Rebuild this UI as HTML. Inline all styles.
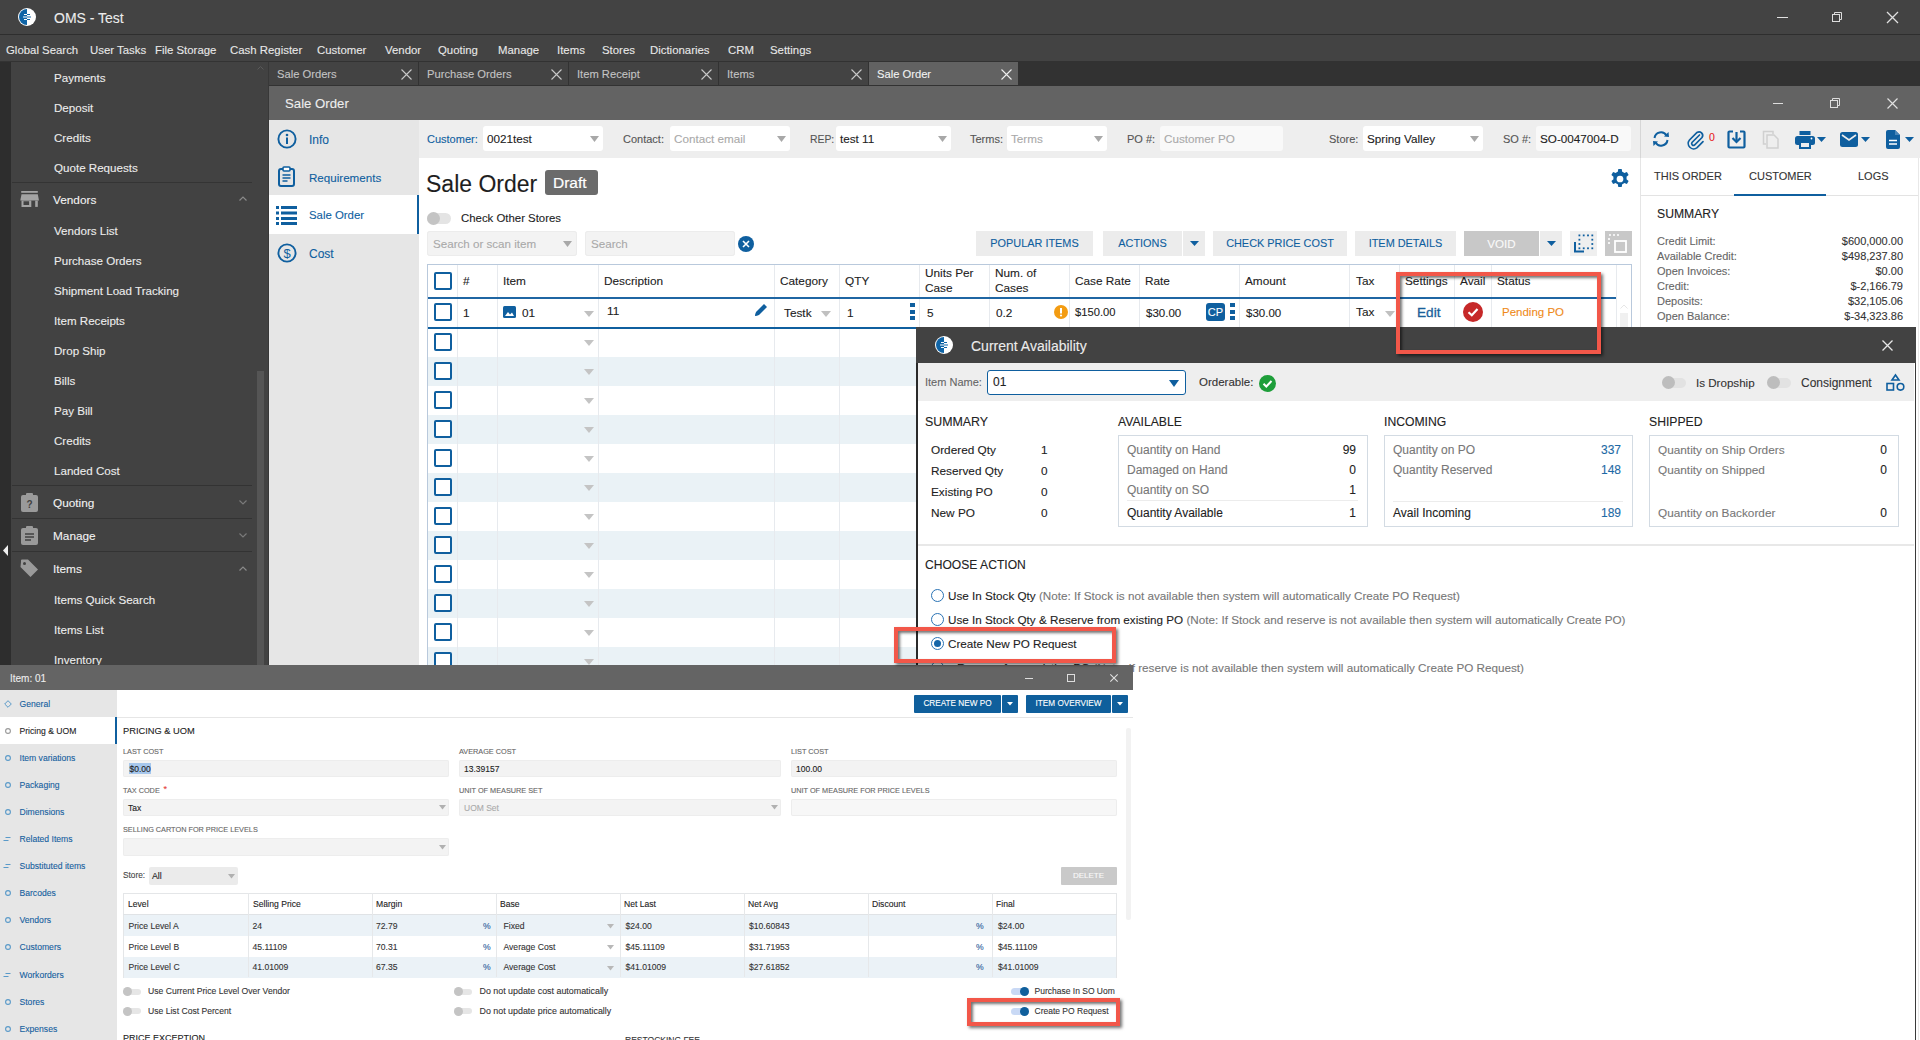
<!DOCTYPE html><html><head><meta charset="utf-8"><style>
html,body{margin:0;padding:0;width:1920px;height:1040px;overflow:hidden;background:#fff;}
body{position:relative;font-family:"Liberation Sans",sans-serif;}
.a{position:absolute;}
.t{white-space:nowrap;-webkit-text-stroke:0.1px currentColor;}
svg{overflow:visible;}
</style></head><body>
<div class="a" style="left:0px;top:0px;width:1920px;height:34px;background:#434343"></div>
<div class="a" style="left:0px;top:34px;width:1920px;height:1px;background:#2e2e2e"></div>
<div class="a" style="left:0px;top:35px;width:1920px;height:26px;background:#434343"></div>
<svg class="a" style="left:17.0px;top:7.0px;" width="20.0" height="20.0" viewBox="0 0 20.0 20.0"><g transform="scale(1.0)"><circle cx="10" cy="10" r="9" fill="#fff"/><path d="M10 2A8 8 0 0 0 10 18Z" fill="#0f64a6"/><path d="M7 7.5h3M6 10h4M7 12.5h3" stroke="#fff" stroke-width="1.2"/><path d="M10 7.5h3M10 10h4M10 12.5h3" stroke="#0f64a6" stroke-width="1.2"/><path d="M6 10h8" stroke="#8fb6d6" stroke-width="1.3" opacity="0.8"/></g></svg>
<div class="a t" style="left:54px;top:9.60px;font-size:14px;line-height:16.80px;color:#ececec;">OMS - Test</div>
<div class="a" style="left:1777px;top:17px;width:11px;height:1.3px;background:#e0e0e0"></div>
<svg class="a" style="left:1831px;top:11px;" width="12" height="12" viewBox="0 0 12 12"><rect x="1.5" y="3.5" width="7" height="7" fill="none" stroke="#ddd"/><path d="M3.5 3.5V1.5h7v7h-2" fill="none" stroke="#ddd"/></svg>
<svg class="a" style="left:1886px;top:11px;" width="13" height="13" viewBox="0 0 13 13"><path d="M1 1L12 12M12 1L1 12" stroke="#e0e0e0" stroke-width="1.3"/></svg>
<div class="a t" style="left:6px;top:44.16px;font-size:11.4px;line-height:13.68px;color:#e8e8e8;">Global Search</div>
<div class="a t" style="left:90px;top:44.16px;font-size:11.4px;line-height:13.68px;color:#e8e8e8;">User Tasks</div>
<div class="a t" style="left:155px;top:44.16px;font-size:11.4px;line-height:13.68px;color:#e8e8e8;">File Storage</div>
<div class="a t" style="left:230px;top:44.16px;font-size:11.4px;line-height:13.68px;color:#e8e8e8;">Cash Register</div>
<div class="a t" style="left:317px;top:44.16px;font-size:11.4px;line-height:13.68px;color:#e8e8e8;">Customer</div>
<div class="a t" style="left:385px;top:44.16px;font-size:11.4px;line-height:13.68px;color:#e8e8e8;">Vendor</div>
<div class="a t" style="left:438px;top:44.16px;font-size:11.4px;line-height:13.68px;color:#e8e8e8;">Quoting</div>
<div class="a t" style="left:498px;top:44.16px;font-size:11.4px;line-height:13.68px;color:#e8e8e8;">Manage</div>
<div class="a t" style="left:557px;top:44.16px;font-size:11.4px;line-height:13.68px;color:#e8e8e8;">Items</div>
<div class="a t" style="left:602px;top:44.16px;font-size:11.4px;line-height:13.68px;color:#e8e8e8;">Stores</div>
<div class="a t" style="left:650px;top:44.16px;font-size:11.4px;line-height:13.68px;color:#e8e8e8;">Dictionaries</div>
<div class="a t" style="left:728px;top:44.16px;font-size:11.4px;line-height:13.68px;color:#e8e8e8;">CRM</div>
<div class="a t" style="left:770px;top:44.16px;font-size:11.4px;line-height:13.68px;color:#e8e8e8;">Settings</div>
<div class="a" style="left:0px;top:61px;width:11px;height:604px;background:#2d2d2d"></div>
<div class="a" style="left:11px;top:61px;width:258px;height:604px;background:#424242"></div>
<div class="a" style="left:257px;top:371px;width:7px;height:294px;background:#555555"></div>
<div class="a" style="left:268px;top:61px;width:1px;height:604px;background:#383838"></div>
<div class="a" style="left:0px;top:61px;width:269px;height:1px;background:#333333"></div>
<svg class="a" style="left:257px;top:66px;" width="7" height="4" viewBox="0 0 7 4"><path d="M0.5 3.5L3.5 0.5L6.5 3.5" fill="none" stroke="#5a5a5a" stroke-width="1"/></svg>
<div class="a t" style="left:54px;top:71.04px;font-size:11.6px;line-height:13.92px;color:#ececec;">Payments</div>
<div class="a t" style="left:54px;top:101.04px;font-size:11.6px;line-height:13.92px;color:#ececec;">Deposit</div>
<div class="a t" style="left:54px;top:131.04px;font-size:11.6px;line-height:13.92px;color:#ececec;">Credits</div>
<div class="a t" style="left:54px;top:161.04px;font-size:11.6px;line-height:13.92px;color:#ececec;">Quote Requests</div>
<div class="a" style="left:12px;top:182px;width:240px;height:1px;background:#343434"></div>
<svg class="a" style="left:20px;top:191px;" width="19" height="16" viewBox="0 0 19 16"><rect x="1.2" y="0" width="16.6" height="1.8" fill="#a4a4a4"/><path d="M1.5 3.2H17.8L19 9.6H0.3Z" fill="#a4a4a4"/><path d="M1.5 9.6H11.3V15.9H1.5ZM3.5 10.3V13.9H9.1V10.3Z" fill="#a4a4a4" fill-rule="evenodd"/><rect x="15.2" y="9.6" width="2.6" height="6.3" fill="#a4a4a4"/></svg>
<div class="a t" style="left:53px;top:192.92px;font-size:11.8px;line-height:14.16px;color:#f2f2f2;">Vendors</div>
<svg class="a" style="left:239px;top:196px;" width="8" height="5" viewBox="0 0 8 5"><path d="M0.5 4.5L4 1L7.5 4.5" fill="none" stroke="#8a8a8a" stroke-width="1.2"/></svg>
<div class="a t" style="left:54px;top:224.04px;font-size:11.6px;line-height:13.92px;color:#ececec;">Vendors List</div>
<div class="a t" style="left:54px;top:254.04px;font-size:11.6px;line-height:13.92px;color:#ececec;">Purchase Orders</div>
<div class="a t" style="left:54px;top:284.04px;font-size:11.6px;line-height:13.92px;color:#ececec;">Shipment Load Tracking</div>
<div class="a t" style="left:54px;top:314.04px;font-size:11.6px;line-height:13.92px;color:#ececec;">Item Receipts</div>
<div class="a t" style="left:54px;top:344.04px;font-size:11.6px;line-height:13.92px;color:#ececec;">Drop Ship</div>
<div class="a t" style="left:54px;top:374.04px;font-size:11.6px;line-height:13.92px;color:#ececec;">Bills</div>
<div class="a t" style="left:54px;top:404.04px;font-size:11.6px;line-height:13.92px;color:#ececec;">Pay Bill</div>
<div class="a t" style="left:54px;top:434.04px;font-size:11.6px;line-height:13.92px;color:#ececec;">Credits</div>
<div class="a t" style="left:54px;top:464.04px;font-size:11.6px;line-height:13.92px;color:#ececec;">Landed Cost</div>
<div class="a" style="left:12px;top:485px;width:240px;height:1px;background:#333333"></div>
<div class="a" style="left:12px;top:518px;width:240px;height:1px;background:#333333"></div>
<div class="a" style="left:12px;top:551px;width:240px;height:1px;background:#333333"></div>
<svg class="a" style="left:21px;top:493px;" width="17" height="19" viewBox="0 0 17 19"><rect x="0" y="2" width="17" height="17" rx="2" fill="#9a9a9a"/><rect x="5" y="0" width="7" height="4" rx="1" fill="#9a9a9a"/><text x="8.5" y="15" font-size="10" font-family="Liberation Sans" fill="#424242" text-anchor="middle" font-weight="bold">?</text></svg>
<div class="a t" style="left:53px;top:495.92px;font-size:11.8px;line-height:14.16px;color:#f2f2f2;">Quoting</div>
<svg class="a" style="left:239px;top:500px;" width="8" height="5" viewBox="0 0 8 5"><path d="M0.5 0.5L4 4L7.5 0.5" fill="none" stroke="#7a7a7a" stroke-width="1.2"/></svg>
<svg class="a" style="left:21px;top:526px;" width="17" height="19" viewBox="0 0 17 19"><rect x="0" y="2" width="17" height="17" rx="2" fill="#9a9a9a"/><rect x="5" y="0" width="7" height="4" rx="1" fill="#9a9a9a"/><path d="M4 8h9M4 11h9M4 14h6" stroke="#424242" stroke-width="1.5"/></svg>
<div class="a t" style="left:53px;top:528.92px;font-size:11.8px;line-height:14.16px;color:#f2f2f2;">Manage</div>
<svg class="a" style="left:239px;top:533px;" width="8" height="5" viewBox="0 0 8 5"><path d="M0.5 0.5L4 4L7.5 0.5" fill="none" stroke="#7a7a7a" stroke-width="1.2"/></svg>
<svg class="a" style="left:20px;top:559px;" width="19" height="19" viewBox="0 0 19 19"><path d="M1 3V1.5A1 1 0 0 1 2 0.5h6l10 10-7.5 7.5L0.5 8Z" fill="#9a9a9a" transform="rotate(0)"/><circle cx="4.5" cy="4.5" r="1.5" fill="#424242"/></svg>
<div class="a t" style="left:53px;top:561.92px;font-size:11.8px;line-height:14.16px;color:#f2f2f2;">Items</div>
<svg class="a" style="left:239px;top:566px;" width="8" height="5" viewBox="0 0 8 5"><path d="M0.5 4.5L4 1L7.5 4.5" fill="none" stroke="#8a8a8a" stroke-width="1.2"/></svg>
<div class="a t" style="left:54px;top:593.04px;font-size:11.6px;line-height:13.92px;color:#ececec;">Items Quick Search</div>
<div class="a t" style="left:54px;top:623.04px;font-size:11.6px;line-height:13.92px;color:#ececec;">Items List</div>
<div class="a t" style="left:54px;top:653.04px;font-size:11.6px;line-height:13.92px;color:#ececec;">Inventory</div>
<svg class="a" style="left:3px;top:545px;" width="5" height="11" viewBox="0 0 5 11"><path d="M5 0V11L0 5.5Z" fill="#f0f0f0"/></svg>
<div class="a" style="left:269px;top:61px;width:1651px;height:25px;background:#323232"></div>
<div class="a" style="left:269px;top:62px;width:149px;height:23px;background:#434343"></div>
<div class="a t" style="left:277px;top:68.28px;font-size:11.2px;line-height:13.44px;color:#c4c4c4;">Sale Orders</div>
<svg class="a" style="left:401px;top:69px;" width="11" height="11" viewBox="0 0 11 11"><path d="M0.5 0.5L10.5 10.5M10.5 0.5L0.5 10.5" stroke="#c8c8c8" stroke-width="1.1"/></svg>
<div class="a" style="left:419px;top:62px;width:149px;height:23px;background:#434343"></div>
<div class="a t" style="left:427px;top:68.28px;font-size:11.2px;line-height:13.44px;color:#c4c4c4;">Purchase Orders</div>
<svg class="a" style="left:551px;top:69px;" width="11" height="11" viewBox="0 0 11 11"><path d="M0.5 0.5L10.5 10.5M10.5 0.5L0.5 10.5" stroke="#c8c8c8" stroke-width="1.1"/></svg>
<div class="a" style="left:569px;top:62px;width:149px;height:23px;background:#434343"></div>
<div class="a t" style="left:577px;top:68.28px;font-size:11.2px;line-height:13.44px;color:#c4c4c4;">Item Receipt</div>
<svg class="a" style="left:701px;top:69px;" width="11" height="11" viewBox="0 0 11 11"><path d="M0.5 0.5L10.5 10.5M10.5 0.5L0.5 10.5" stroke="#c8c8c8" stroke-width="1.1"/></svg>
<div class="a" style="left:719px;top:62px;width:149px;height:23px;background:#434343"></div>
<div class="a t" style="left:727px;top:68.28px;font-size:11.2px;line-height:13.44px;color:#c4c4c4;">Items</div>
<svg class="a" style="left:851px;top:69px;" width="11" height="11" viewBox="0 0 11 11"><path d="M0.5 0.5L10.5 10.5M10.5 0.5L0.5 10.5" stroke="#c8c8c8" stroke-width="1.1"/></svg>
<div class="a" style="left:869px;top:62px;width:149px;height:23px;background:#626262"></div>
<div class="a t" style="left:877px;top:68.28px;font-size:11.2px;line-height:13.44px;color:#f2f2f2;">Sale Order</div>
<svg class="a" style="left:1001px;top:69px;" width="11" height="11" viewBox="0 0 11 11"><path d="M0.5 0.5L10.5 10.5M10.5 0.5L0.5 10.5" stroke="#eee" stroke-width="1.1"/></svg>
<div class="a" style="left:269px;top:86px;width:1651px;height:34px;background:#636363"></div>
<div class="a t" style="left:285px;top:96.08px;font-size:13.2px;line-height:15.84px;color:#eeeeee;">Sale Order</div>
<div class="a" style="left:1773px;top:102.5px;width:10px;height:1.5px;background:#ddd"></div>
<svg class="a" style="left:1829px;top:97px;" width="12" height="12" viewBox="0 0 12 12"><rect x="1.5" y="3.5" width="7" height="7" fill="none" stroke="#ddd"/><path d="M3.5 3.5V1.5h7v7h-2" fill="none" stroke="#ddd"/></svg>
<svg class="a" style="left:1887px;top:98px;" width="11" height="11" viewBox="0 0 11 11"><path d="M0.5 0.5L10.5 10.5M10.5 0.5L0.5 10.5" stroke="#e0e0e0" stroke-width="1.2"/></svg>
<div class="a" style="left:269px;top:120px;width:150px;height:545px;background:#e6e6e6"></div>
<div class="a" style="left:269px;top:195px;width:148px;height:39px;background:#ffffff"></div>
<div class="a" style="left:417px;top:195px;width:2px;height:39px;background:#0f5f9f"></div>
<svg class="a" style="left:277px;top:129px;" width="20" height="20" viewBox="0 0 20 20"><circle cx="10" cy="10" r="8.6" fill="none" stroke="#0f5f9f" stroke-width="1.9"/><circle cx="10" cy="6" r="1.3" fill="#0f5f9f"/><rect x="9" y="8.5" width="2" height="6.5" fill="#0f5f9f"/></svg>
<div class="a t" style="left:309px;top:132.80px;font-size:12px;line-height:14.40px;color:#0f5f9f;">Info</div>
<svg class="a" style="left:278px;top:166px;" width="17" height="21" viewBox="0 0 17 21"><rect x="1" y="3" width="15" height="17" rx="2" fill="none" stroke="#0f5f9f" stroke-width="2"/><rect x="5" y="1" width="7" height="4" rx="1" fill="#fff" stroke="#0f5f9f" stroke-width="1.6"/><path d="M4.5 9h8M4.5 12h8M4.5 15h5" stroke="#0f5f9f" stroke-width="1.6"/></svg>
<div class="a t" style="left:309px;top:171.04px;font-size:11.6px;line-height:13.92px;color:#0f5f9f;">Requirements</div>
<svg class="a" style="left:276px;top:205px;" width="21" height="20" viewBox="0 0 21 20"><rect x="0" y="1" width="3" height="3" fill="#0f5f9f"/><rect x="5" y="1" width="16" height="3" fill="#0f5f9f"/><rect x="0" y="6.5" width="3" height="3" fill="#0f5f9f"/><rect x="5" y="6.5" width="16" height="3" fill="#0f5f9f"/><rect x="0" y="12" width="3" height="3" fill="#0f5f9f"/><rect x="5" y="12" width="16" height="3" fill="#0f5f9f"/><rect x="0" y="17" width="3" height="3" fill="#0f5f9f"/><rect x="5" y="17" width="16" height="3" fill="#0f5f9f"/></svg>
<div class="a t" style="left:309px;top:209.16px;font-size:11.4px;line-height:13.68px;color:#0f5f9f;">Sale Order</div>
<svg class="a" style="left:277px;top:243px;" width="20" height="20" viewBox="0 0 20 20"><circle cx="10" cy="10" r="8.6" fill="none" stroke="#0f5f9f" stroke-width="1.9"/><text x="10" y="14.6" font-size="13" font-family="Liberation Sans" fill="#0f5f9f" text-anchor="middle">$</text></svg>
<div class="a t" style="left:309px;top:246.80px;font-size:12px;line-height:14.40px;color:#0f5f9f;">Cost</div>
<div class="a" style="left:419px;top:120px;width:1222px;height:38px;background:#eeeeee"></div>
<div class="a t" style="left:427px;top:133.40px;font-size:11px;line-height:13.20px;color:#0f5f9f;">Customer:</div>
<div class="a" style="left:483px;top:126px;width:120px;height:25px;background:#fff;border-radius:3px"></div>
<div class="a t" style="left:487px;top:131.98px;font-size:11.7px;line-height:14.04px;color:#222;">0021test</div>
<svg class="a" style="left:589.5px;top:136.0px;" width="9" height="6" viewBox="0 0 9 6"><path d="M0 0H9L4.5 6Z" fill="#a8a8a8"/></svg>
<div class="a t" style="left:623px;top:133.40px;font-size:11px;line-height:13.20px;color:#555;">Contact:</div>
<div class="a" style="left:670px;top:126px;width:120px;height:25px;background:#fff;border-radius:3px"></div>
<div class="a t" style="left:674px;top:131.98px;font-size:11.7px;line-height:14.04px;color:#a9a9a9;">Contact email</div>
<svg class="a" style="left:776.5px;top:136.0px;" width="9" height="6" viewBox="0 0 9 6"><path d="M0 0H9L4.5 6Z" fill="#a8a8a8"/></svg>
<div class="a t" style="left:810px;top:133.76px;font-size:10.4px;line-height:12.48px;color:#555;">REP:</div>
<div class="a" style="left:836px;top:126px;width:115px;height:25px;background:#fff;border-radius:3px"></div>
<div class="a t" style="left:840px;top:131.98px;font-size:11.7px;line-height:14.04px;color:#222;">test 11</div>
<svg class="a" style="left:937.5px;top:136.0px;" width="9" height="6" viewBox="0 0 9 6"><path d="M0 0H9L4.5 6Z" fill="#a8a8a8"/></svg>
<div class="a t" style="left:970px;top:133.40px;font-size:11px;line-height:13.20px;color:#555;">Terms:</div>
<div class="a" style="left:1007px;top:126px;width:100px;height:25px;background:#fff;border-radius:3px"></div>
<div class="a t" style="left:1011px;top:131.98px;font-size:11.7px;line-height:14.04px;color:#a9a9a9;">Terms</div>
<svg class="a" style="left:1093.5px;top:136.0px;" width="9" height="6" viewBox="0 0 9 6"><path d="M0 0H9L4.5 6Z" fill="#a8a8a8"/></svg>
<div class="a t" style="left:1127px;top:133.40px;font-size:11px;line-height:13.20px;color:#555;">PO #:</div>
<div class="a" style="left:1160px;top:126px;width:123px;height:25px;background:#f9f9f9;border-radius:3px"></div>
<div class="a t" style="left:1164px;top:131.98px;font-size:11.7px;line-height:14.04px;color:#a9a9a9;">Customer PO</div>
<div class="a t" style="left:1329px;top:133.40px;font-size:11px;line-height:13.20px;color:#555;">Store:</div>
<div class="a" style="left:1363px;top:126px;width:120px;height:25px;background:#fff;border-radius:3px"></div>
<div class="a t" style="left:1367px;top:131.98px;font-size:11.7px;line-height:14.04px;color:#222;">Spring Valley</div>
<svg class="a" style="left:1469.5px;top:136.0px;" width="9" height="6" viewBox="0 0 9 6"><path d="M0 0H9L4.5 6Z" fill="#a8a8a8"/></svg>
<div class="a t" style="left:1503px;top:133.40px;font-size:11px;line-height:13.20px;color:#555;">SO #:</div>
<div class="a" style="left:1536px;top:126px;width:95px;height:25px;background:#f9f9f9;border-radius:3px"></div>
<div class="a t" style="left:1540px;top:131.98px;font-size:11.7px;line-height:14.04px;color:#222;">SO-0047004-D</div>
<div class="a t" style="left:426px;top:170.70px;font-size:23px;line-height:27.60px;color:#1e1e1e;">Sale Order</div>
<div class="a" style="left:545px;top:170px;width:53px;height:25px;background:#6b6b6b;border-radius:3px"></div>
<div class="a t" style="left:553px;top:173.70px;font-size:15.5px;line-height:18.60px;color:#ffffff;-webkit-text-stroke:0.2px #fff">Draft</div>
<svg class="a" style="left:1610px;top:169px;" width="20" height="20" viewBox="0 0 20 20"><g transform="translate(10 10) scale(1.05)" fill="#0f5f9f"><path d="M-1.6-9.5h3.2l.5 2.6a7 7 0 0 1 2 1.2l2.5-.9 1.6 2.8-2 1.7a7 7 0 0 1 0 2.3l2 1.7-1.6 2.8-2.5-.9a7 7 0 0 1-2 1.2l-.5 2.6h-3.2l-.5-2.6a7 7 0 0 1-2-1.2l-2.5.9-1.6-2.8 2-1.7a7 7 0 0 1 0-2.3l-2-1.7 1.6-2.8 2.5.9a7 7 0 0 1 2-1.2Z"/><circle r="3.2" fill="#fff"/></g></svg>
<div class="a" style="left:427px;top:213px;width:24px;height:11px;background:#e4e4e4;border-radius:6px"></div>
<div class="a" style="left:427px;top:212px;width:13px;height:13px;border-radius:50%;background:#c4c4c4"></div>
<div class="a t" style="left:461px;top:212.16px;font-size:11.4px;line-height:13.68px;color:#222;">Check Other Stores</div>
<div class="a" style="left:427px;top:231px;width:150px;height:25px;background:#f3f3f3;border-radius:3px;box-shadow:inset 0 0 0 1px #ececec"></div>
<div class="a t" style="left:433px;top:237.04px;font-size:11.6px;line-height:13.92px;color:#a9a9a9;">Search or scan item</div>
<svg class="a" style="left:562.5px;top:241.0px;" width="9" height="6" viewBox="0 0 9 6"><path d="M0 0H9L4.5 6Z" fill="#a8a8a8"/></svg>
<div class="a" style="left:585px;top:231px;width:150px;height:25px;background:#f3f3f3;border-radius:3px;box-shadow:inset 0 0 0 1px #ececec"></div>
<div class="a t" style="left:591px;top:237.04px;font-size:11.6px;line-height:13.92px;color:#a9a9a9;">Search</div>
<svg class="a" style="left:738px;top:236px;" width="16" height="16" viewBox="0 0 16 16"><circle cx="8" cy="8" r="8" fill="#0f5f9f"/><path d="M5 5L11 11M11 5L5 11" stroke="#fff" stroke-width="1.6"/></svg>
<div class="a" style="left:976px;top:231px;width:117px;height:25px;background:#ececec"></div>
<div class="a t" style="left:976px;top:237.46px;width:117px;text-align:center;font-size:10.9px;line-height:13.08px;color:#0f5f9f">POPULAR ITEMS</div>
<div class="a" style="left:1103px;top:231px;width:79px;height:25px;background:#ececec"></div>
<div class="a t" style="left:1103px;top:237.46px;width:79px;text-align:center;font-size:10.9px;line-height:13.08px;color:#0f5f9f">ACTIONS</div>
<div class="a" style="left:1183px;top:231px;width:22px;height:25px;background:#ececec"></div>
<svg class="a" style="left:1189.5px;top:241.0px;" width="9" height="5" viewBox="0 0 9 5"><path d="M0 0H9L4.5 5Z" fill="#0f5f9f"/></svg>
<div class="a" style="left:1213px;top:231px;width:134px;height:25px;background:#ececec"></div>
<div class="a t" style="left:1213px;top:237.46px;width:134px;text-align:center;font-size:10.9px;line-height:13.08px;color:#0f5f9f">CHECK PRICE COST</div>
<div class="a" style="left:1355px;top:231px;width:101px;height:25px;background:#ececec"></div>
<div class="a t" style="left:1355px;top:237.46px;width:101px;text-align:center;font-size:10.9px;line-height:13.08px;color:#0f5f9f">ITEM DETAILS</div>
<div class="a" style="left:1464px;top:231px;width:75px;height:25px;background:#c8c8c8"></div>
<div class="a t" style="left:1464px;top:237.04px;width:75px;text-align:center;font-size:11.6px;line-height:13.92px;color:#fafafa">VOID</div>
<div class="a" style="left:1540px;top:231px;width:22px;height:25px;background:#ececec"></div>
<svg class="a" style="left:1546.5px;top:241.0px;" width="9" height="5" viewBox="0 0 9 5"><path d="M0 0H9L4.5 5Z" fill="#0f5f9f"/></svg>
<div class="a" style="left:1570px;top:231px;width:27px;height:25px;background:#efefef"></div>
<svg class="a" style="left:1574px;top:234px;" width="20" height="20" viewBox="0 0 20 20"><rect x="4.5" y="0.5" width="1.8" height="1.8" fill="#0f5f9f"/><rect x="4.5" y="4.8" width="1.8" height="1.8" fill="#0f5f9f"/><rect x="4.5" y="9.1" width="1.8" height="1.8" fill="#0f5f9f"/><rect x="4.5" y="13.4" width="1.8" height="1.8" fill="#0f5f9f"/><rect x="8.8" y="0.5" width="1.8" height="1.8" fill="#0f5f9f"/><rect x="8.8" y="13.4" width="1.8" height="1.8" fill="#0f5f9f"/><rect x="13.1" y="0.5" width="1.8" height="1.8" fill="#0f5f9f"/><rect x="13.1" y="13.4" width="1.8" height="1.8" fill="#0f5f9f"/><rect x="17.4" y="0.5" width="1.8" height="1.8" fill="#0f5f9f"/><rect x="17.4" y="4.8" width="1.8" height="1.8" fill="#0f5f9f"/><rect x="17.4" y="9.1" width="1.8" height="1.8" fill="#0f5f9f"/><rect x="17.4" y="13.4" width="1.8" height="1.8" fill="#0f5f9f"/><path d="M1 8V17.5H10" fill="none" stroke="#0f5f9f" stroke-width="2"/></svg>
<div class="a" style="left:1605px;top:231px;width:27px;height:25px;background:#c8c8c8"></div>
<svg class="a" style="left:1608px;top:234px;" width="21" height="19" viewBox="0 0 21 19"><rect x="7" y="7" width="11" height="11" fill="none" stroke="#fff" stroke-width="1.8"/><path d="M1 1h2M5 1h2M9 1h2M1 4v2M1 8v2" stroke="#fff" stroke-width="1.6"/></svg>
<div class="a" style="left:427px;top:264px;width:1205px;height:401px;background:#fff;box-shadow:inset 1px 0 0 #b9c9dc, inset -1px 0 0 #b9c9dc, inset 0 1px 0 #b9c9dc"></div>
<div class="a" style="left:428px;top:357px;width:1188px;height:29px;background:#eaf2f6"></div>
<div class="a" style="left:428px;top:415px;width:1188px;height:29px;background:#eaf2f6"></div>
<div class="a" style="left:428px;top:473px;width:1188px;height:29px;background:#eaf2f6"></div>
<div class="a" style="left:428px;top:531px;width:1188px;height:29px;background:#eaf2f6"></div>
<div class="a" style="left:428px;top:589px;width:1188px;height:29px;background:#eaf2f6"></div>
<div class="a" style="left:428px;top:647px;width:1188px;height:29px;background:#eaf2f6"></div>
<div class="a" style="left:457px;top:265px;width:1px;height:400px;background:#e7eaee"></div>
<div class="a" style="left:497px;top:265px;width:1px;height:400px;background:#e7eaee"></div>
<div class="a" style="left:598px;top:265px;width:1px;height:400px;background:#e7eaee"></div>
<div class="a" style="left:774px;top:265px;width:1px;height:400px;background:#e7eaee"></div>
<div class="a" style="left:839px;top:265px;width:1px;height:400px;background:#e7eaee"></div>
<div class="a" style="left:919px;top:265px;width:1px;height:400px;background:#e7eaee"></div>
<div class="a" style="left:989px;top:265px;width:1px;height:400px;background:#e7eaee"></div>
<div class="a" style="left:1069px;top:265px;width:1px;height:400px;background:#e7eaee"></div>
<div class="a" style="left:1139px;top:265px;width:1px;height:400px;background:#e7eaee"></div>
<div class="a" style="left:1239px;top:265px;width:1px;height:400px;background:#e7eaee"></div>
<div class="a" style="left:1349px;top:265px;width:1px;height:400px;background:#e7eaee"></div>
<div class="a" style="left:1399px;top:265px;width:1px;height:400px;background:#e7eaee"></div>
<div class="a" style="left:1454px;top:265px;width:1px;height:400px;background:#e7eaee"></div>
<div class="a" style="left:1491px;top:265px;width:1px;height:400px;background:#e7eaee"></div>
<div class="a" style="left:1616px;top:265px;width:1px;height:400px;background:#e7eaee"></div>
<div class="a t" style="left:463px;top:273.92px;font-size:11.8px;line-height:14.16px;color:#222;">#</div>
<div class="a t" style="left:503px;top:273.92px;font-size:11.8px;line-height:14.16px;color:#222;">Item</div>
<div class="a t" style="left:604px;top:273.92px;font-size:11.8px;line-height:14.16px;color:#222;">Description</div>
<div class="a t" style="left:780px;top:273.92px;font-size:11.8px;line-height:14.16px;color:#222;">Category</div>
<div class="a t" style="left:845px;top:273.92px;font-size:11.8px;line-height:14.16px;color:#222;">QTY</div>
<div class="a t" style="left:1075px;top:273.92px;font-size:11.8px;line-height:14.16px;color:#222;">Case Rate</div>
<div class="a t" style="left:1145px;top:273.92px;font-size:11.8px;line-height:14.16px;color:#222;">Rate</div>
<div class="a t" style="left:1245px;top:273.92px;font-size:11.8px;line-height:14.16px;color:#222;">Amount</div>
<div class="a t" style="left:1356px;top:273.92px;font-size:11.8px;line-height:14.16px;color:#222;">Tax</div>
<div class="a t" style="left:1405px;top:273.92px;font-size:11.8px;line-height:14.16px;color:#222;">Settings</div>
<div class="a t" style="left:1460px;top:273.92px;font-size:11.8px;line-height:14.16px;color:#222;">Avail</div>
<div class="a t" style="left:1497px;top:273.92px;font-size:11.8px;line-height:14.16px;color:#222;">Status</div>
<div class="a t" style="left:925px;top:266.42px;font-size:11.8px;line-height:14.16px;color:#222;">Units Per</div>
<div class="a t" style="left:925px;top:281.42px;font-size:11.8px;line-height:14.16px;color:#222;">Case</div>
<div class="a t" style="left:995px;top:266.42px;font-size:11.8px;line-height:14.16px;color:#222;">Num. of</div>
<div class="a t" style="left:995px;top:281.42px;font-size:11.8px;line-height:14.16px;color:#222;">Cases</div>
<div class="a" style="left:434px;top:272px;width:14px;height:14px;border:2px solid #0f5f9f;border-radius:2px;background:#fff"></div>
<div class="a" style="left:428px;top:297px;width:1188px;height:1.5px;background:#1f66a3"></div>
<div class="a" style="left:428px;top:327px;width:1188px;height:1.5px;background:#0f5f9f"></div>
<div class="a" style="left:434px;top:303px;width:14px;height:14px;border:2px solid #0f5f9f;border-radius:2px;background:#fff"></div>
<div class="a t" style="left:463px;top:305.92px;font-size:11.8px;line-height:14.16px;color:#222;">1</div>
<svg class="a" style="left:503px;top:306px;" width="13" height="12" viewBox="0 0 13 12"><rect width="13" height="12" rx="1.5" fill="#0f5f9f"/><path d="M2 10L5 6L7 8.5L9 6.5L11 10Z" fill="#fff"/></svg>
<div class="a t" style="left:522px;top:305.92px;font-size:11.8px;line-height:14.16px;color:#222;">01</div>
<svg class="a" style="left:584.0px;top:311.0px;" width="10" height="6" viewBox="0 0 10 6"><path d="M0 0H10L5.0 6Z" fill="#c0c0c0"/></svg>
<div class="a t" style="left:607px;top:303.92px;font-size:11.8px;line-height:14.16px;color:#222;">11</div>
<svg class="a" style="left:753px;top:302px;" width="16" height="16" viewBox="0 0 16 16"><path d="M2 14L3 10L11 2L14 5L6 13Z" fill="#0f5f9f"/><path d="M2 14L3 10.5L5.5 13Z" fill="#0f5f9f"/></svg>
<div class="a t" style="left:784px;top:305.92px;font-size:11.8px;line-height:14.16px;color:#222;">Testk</div>
<svg class="a" style="left:821.0px;top:311.0px;" width="10" height="6" viewBox="0 0 10 6"><path d="M0 0H10L5.0 6Z" fill="#c0c0c0"/></svg>
<div class="a t" style="left:847px;top:305.92px;font-size:11.8px;line-height:14.16px;color:#222;">1</div>
<div class="a" style="left:910px;top:303.0px;width:5px;height:4px;background:#0f5f9f"></div>
<div class="a" style="left:910px;top:309.5px;width:5px;height:4px;background:#0f5f9f"></div>
<div class="a" style="left:910px;top:316.0px;width:5px;height:4px;background:#0f5f9f"></div>
<div class="a t" style="left:927px;top:305.92px;font-size:11.8px;line-height:14.16px;color:#222;">5</div>
<div class="a t" style="left:996px;top:305.92px;font-size:11.8px;line-height:14.16px;color:#222;">0.2</div>
<svg class="a" style="left:1054px;top:305px;" width="14" height="14" viewBox="0 0 14 14"><circle cx="7" cy="7" r="7" fill="#f39c12"/><rect x="6" y="3" width="2" height="5.5" fill="#fff"/><circle cx="7" cy="10.5" r="1.1" fill="#fff"/></svg>
<div class="a t" style="left:1075px;top:306.28px;font-size:11.2px;line-height:13.44px;color:#222;">$150.00</div>
<div class="a t" style="left:1146px;top:307.10px;font-size:11.5px;line-height:13.80px;color:#222;">$30.00</div>
<div class="a" style="left:1206px;top:303px;width:19px;height:18px;background:#0f5f9f;border-radius:3px"></div>
<div class="a t" style="left:1206px;top:305px;width:19px;text-align:center;font-size:11px;line-height:14px;color:#fff">CP</div>
<div class="a" style="left:1230px;top:303.0px;width:5px;height:4px;background:#0f5f9f"></div>
<div class="a" style="left:1230px;top:309.5px;width:5px;height:4px;background:#0f5f9f"></div>
<div class="a" style="left:1230px;top:316.0px;width:5px;height:4px;background:#0f5f9f"></div>
<div class="a t" style="left:1246px;top:307.10px;font-size:11.5px;line-height:13.80px;color:#222;">$30.00</div>
<div class="a t" style="left:1356px;top:304.92px;font-size:11.8px;line-height:14.16px;color:#222;">Tax</div>
<svg class="a" style="left:1385.0px;top:311.0px;" width="10" height="6" viewBox="0 0 10 6"><path d="M0 0H10L5.0 6Z" fill="#c0c0c0"/></svg>
<div class="a t" style="left:1417px;top:305.34px;font-size:13.6px;line-height:16.32px;color:#1a5f9a;-webkit-text-stroke:0.3px #1a5f9a">Edit</div>
<svg class="a" style="left:1463px;top:302px;" width="20" height="20" viewBox="0 0 20 20"><circle cx="10" cy="10" r="10" fill="#c62828"/><path d="M5.5 10.2L8.8 13.3L14.5 7" fill="none" stroke="#fff" stroke-width="2.2"/></svg>
<div class="a t" style="left:1502px;top:306.10px;font-size:11.5px;line-height:13.80px;color:#ef8a1a;">Pending PO</div>
<div class="a" style="left:434px;top:333px;width:14px;height:14px;border:2px solid #0f5f9f;border-radius:2px;background:#fff"></div>
<svg class="a" style="left:584.0px;top:340.0px;" width="10" height="6" viewBox="0 0 10 6"><path d="M0 0H10L5.0 6Z" fill="#c4c4c4"/></svg>
<div class="a" style="left:434px;top:362px;width:14px;height:14px;border:2px solid #0f5f9f;border-radius:2px;background:#fff"></div>
<svg class="a" style="left:584.0px;top:369.0px;" width="10" height="6" viewBox="0 0 10 6"><path d="M0 0H10L5.0 6Z" fill="#c4c4c4"/></svg>
<div class="a" style="left:434px;top:391px;width:14px;height:14px;border:2px solid #0f5f9f;border-radius:2px;background:#fff"></div>
<svg class="a" style="left:584.0px;top:398.0px;" width="10" height="6" viewBox="0 0 10 6"><path d="M0 0H10L5.0 6Z" fill="#c4c4c4"/></svg>
<div class="a" style="left:434px;top:420px;width:14px;height:14px;border:2px solid #0f5f9f;border-radius:2px;background:#fff"></div>
<svg class="a" style="left:584.0px;top:427.0px;" width="10" height="6" viewBox="0 0 10 6"><path d="M0 0H10L5.0 6Z" fill="#c4c4c4"/></svg>
<div class="a" style="left:434px;top:449px;width:14px;height:14px;border:2px solid #0f5f9f;border-radius:2px;background:#fff"></div>
<svg class="a" style="left:584.0px;top:456.0px;" width="10" height="6" viewBox="0 0 10 6"><path d="M0 0H10L5.0 6Z" fill="#c4c4c4"/></svg>
<div class="a" style="left:434px;top:478px;width:14px;height:14px;border:2px solid #0f5f9f;border-radius:2px;background:#fff"></div>
<svg class="a" style="left:584.0px;top:485.0px;" width="10" height="6" viewBox="0 0 10 6"><path d="M0 0H10L5.0 6Z" fill="#c4c4c4"/></svg>
<div class="a" style="left:434px;top:507px;width:14px;height:14px;border:2px solid #0f5f9f;border-radius:2px;background:#fff"></div>
<svg class="a" style="left:584.0px;top:514.0px;" width="10" height="6" viewBox="0 0 10 6"><path d="M0 0H10L5.0 6Z" fill="#c4c4c4"/></svg>
<div class="a" style="left:434px;top:536px;width:14px;height:14px;border:2px solid #0f5f9f;border-radius:2px;background:#fff"></div>
<svg class="a" style="left:584.0px;top:543.0px;" width="10" height="6" viewBox="0 0 10 6"><path d="M0 0H10L5.0 6Z" fill="#c4c4c4"/></svg>
<div class="a" style="left:434px;top:565px;width:14px;height:14px;border:2px solid #0f5f9f;border-radius:2px;background:#fff"></div>
<svg class="a" style="left:584.0px;top:572.0px;" width="10" height="6" viewBox="0 0 10 6"><path d="M0 0H10L5.0 6Z" fill="#c4c4c4"/></svg>
<div class="a" style="left:434px;top:594px;width:14px;height:14px;border:2px solid #0f5f9f;border-radius:2px;background:#fff"></div>
<svg class="a" style="left:584.0px;top:601.0px;" width="10" height="6" viewBox="0 0 10 6"><path d="M0 0H10L5.0 6Z" fill="#c4c4c4"/></svg>
<div class="a" style="left:434px;top:623px;width:14px;height:14px;border:2px solid #0f5f9f;border-radius:2px;background:#fff"></div>
<svg class="a" style="left:584.0px;top:630.0px;" width="10" height="6" viewBox="0 0 10 6"><path d="M0 0H10L5.0 6Z" fill="#c4c4c4"/></svg>
<div class="a" style="left:434px;top:652px;width:14px;height:14px;border:2px solid #0f5f9f;border-radius:2px;background:#fff"></div>
<svg class="a" style="left:584.0px;top:659.0px;" width="10" height="6" viewBox="0 0 10 6"><path d="M0 0H10L5.0 6Z" fill="#c4c4c4"/></svg>
<div class="a" style="left:1617px;top:299px;width:14px;height:366px;background:#fff"></div>
<svg class="a" style="left:1620px;top:304px;" width="8" height="5" viewBox="0 0 8 5"><path d="M0.5 4.5L4 1L7.5 4.5" fill="none" stroke="#e6e6e6" stroke-width="1"/></svg>
<div class="a" style="left:1620px;top:313px;width:8px;height:14px;background:#f0f0f0"></div>
<div class="a" style="left:1641px;top:120px;width:279px;height:38px;background:#eeeeee"></div>
<div class="a" style="left:1640px;top:120px;width:1px;height:38px;background:#d6d6d6"></div>
<svg class="a" style="left:1651px;top:131px;" width="20" height="16" viewBox="0 0 20 16"><path d="M3.5 7A6.5 6.5 0 0 1 15.5 4.5" fill="none" stroke="#0f5f9f" stroke-width="2"/><path d="M16.5 9A6.5 6.5 0 0 1 4.5 11.5" fill="none" stroke="#0f5f9f" stroke-width="2"/><path d="M13 5.5L18 6L17.5 1Z" fill="#0f5f9f"/><path d="M7 10.5L2 10L2.5 15Z" fill="#0f5f9f"/></svg>
<svg class="a" style="left:1686px;top:130px;" width="19" height="19" viewBox="0 0 19 19"><path d="M13.5 5L6 12.5a1.8 1.8 0 0 0 2.5 2.5L16 7.5a3.6 3.6 0 0 0-5-5L3.5 10a5.4 5.4 0 0 0 7.6 7.6L17 11.7" fill="none" stroke="#0f5f9f" stroke-width="1.7" stroke-linecap="round"/></svg>
<div class="a t" style="left:1709px;top:130.70px;font-size:10.5px;line-height:12.60px;color:#e8191a;">0</div>
<svg class="a" style="left:1727px;top:130px;" width="20" height="19" viewBox="0 0 20 19"><path d="M6 1.5H2.5a1 1 0 0 0-1 1V16.5a1 1 0 0 0 1 1H16.5a1 1 0 0 0 1-1V2.5a1 1 0 0 0-1-1H13" fill="none" stroke="#0f5f9f" stroke-width="2.2"/><path d="M9.5 2V11" stroke="#0f5f9f" stroke-width="2.2"/><path d="M5.5 8L9.5 12L13.5 8" fill="none" stroke="#0f5f9f" stroke-width="2.2"/></svg>
<svg class="a" style="left:1762px;top:130px;" width="18" height="19" viewBox="0 0 18 19"><path d="M4 14H1.5V1.5H11V4" fill="none" stroke="#d0d0d0" stroke-width="1.5"/><path d="M5 5H12L16 9V18H5Z" fill="none" stroke="#d0d0d0" stroke-width="1.5"/></svg>
<svg class="a" style="left:1795px;top:130px;" width="20" height="19" viewBox="0 0 20 19"><rect x="4.5" y="1" width="11" height="4" fill="#0f5f9f"/><rect x="0" y="6" width="20" height="9" rx="2.5" fill="#0f5f9f"/><rect x="4" y="12" width="12" height="7" fill="#0f5f9f"/><rect x="6" y="13" width="8" height="4" fill="#eee"/><circle cx="16.5" cy="8.5" r="0.9" fill="#fff"/></svg>
<svg class="a" style="left:1816.5px;top:137.0px;" width="9" height="5" viewBox="0 0 9 5"><path d="M0 0H9L4.5 5Z" fill="#0f5f9f"/></svg>
<svg class="a" style="left:1840px;top:131px;" width="18" height="16" viewBox="0 0 18 16"><rect x="0" y="1" width="18" height="15" rx="2.5" fill="#0f5f9f"/><path d="M2 4L9 9L16 4" fill="none" stroke="#eee" stroke-width="1.6"/></svg>
<svg class="a" style="left:1860.5px;top:137.0px;" width="9" height="5" viewBox="0 0 9 5"><path d="M0 0H9L4.5 5Z" fill="#0f5f9f"/></svg>
<svg class="a" style="left:1886px;top:130px;" width="14" height="19" viewBox="0 0 14 19"><path d="M0 2A2 2 0 0 1 2 0H9L14 5V17A2 2 0 0 1 12 19H2A2 2 0 0 1 0 17Z" fill="#0f5f9f"/><path d="M9 0V5H14" fill="#4a86b8"/><path d="M3 10.5H11M3 14H11" stroke="#fff" stroke-width="1.6"/></svg>
<svg class="a" style="left:1904.5px;top:137.0px;" width="9" height="5" viewBox="0 0 9 5"><path d="M0 0H9L4.5 5Z" fill="#0f5f9f"/></svg>
<div class="a" style="left:1641px;top:158px;width:279px;height:507px;background:#ffffff"></div>
<div class="a" style="left:1640px;top:158px;width:1px;height:507px;background:#e5e5e5"></div>
<div class="a t" style="left:1654px;top:170.40px;font-size:11px;line-height:13.20px;color:#333;">THIS ORDER</div>
<div class="a t" style="left:1749px;top:170.40px;font-size:11px;line-height:13.20px;color:#333;">CUSTOMER</div>
<div class="a t" style="left:1858px;top:170.40px;font-size:11px;line-height:13.20px;color:#333;">LOGS</div>
<div class="a" style="left:1641px;top:195px;width:278px;height:1px;background:#e3e3e3"></div>
<div class="a" style="left:1734px;top:194px;width:92px;height:2.4px;background:#0f5f9f"></div>
<div class="a t" style="left:1657px;top:206.68px;font-size:12.2px;line-height:14.64px;color:#222;">SUMMARY</div>
<div class="a t" style="left:1657px;top:235.40px;font-size:11px;line-height:13.20px;color:#666;">Credit Limit:</div>
<div class="a t" style="right:17px;top:235.40px;font-size:11px;line-height:13.20px;color:#333;text-align:right;">$600,000.00</div>
<div class="a t" style="left:1657px;top:250.40px;font-size:11px;line-height:13.20px;color:#666;">Available Credit:</div>
<div class="a t" style="right:17px;top:250.40px;font-size:11px;line-height:13.20px;color:#333;text-align:right;">$498,237.80</div>
<div class="a t" style="left:1657px;top:265.40px;font-size:11px;line-height:13.20px;color:#666;">Open Invoices:</div>
<div class="a t" style="right:17px;top:265.40px;font-size:11px;line-height:13.20px;color:#333;text-align:right;">$0.00</div>
<div class="a t" style="left:1657px;top:280.40px;font-size:11px;line-height:13.20px;color:#666;">Credit:</div>
<div class="a t" style="right:17px;top:280.40px;font-size:11px;line-height:13.20px;color:#333;text-align:right;">$-2,166.79</div>
<div class="a t" style="left:1657px;top:295.40px;font-size:11px;line-height:13.20px;color:#666;">Deposits:</div>
<div class="a t" style="right:17px;top:295.40px;font-size:11px;line-height:13.20px;color:#333;text-align:right;">$32,105.06</div>
<div class="a t" style="left:1657px;top:310.40px;font-size:11px;line-height:13.20px;color:#666;">Open Balance:</div>
<div class="a t" style="right:17px;top:310.40px;font-size:11px;line-height:13.20px;color:#333;text-align:right;">$-34,323.86</div>
<div class="a" style="left:916px;top:327px;width:1000px;height:713px;background:#fff"></div>
<div class="a" style="left:916px;top:327px;width:2px;height:713px;background:#2a2a2a"></div>
<div class="a" style="left:1914.5px;top:327px;width:1.5px;height:713px;background:#3a3a3a"></div>
<div class="a" style="left:1916px;top:327px;width:4px;height:713px;background:#ffffff"></div>
<div class="a" style="left:1918px;top:158px;width:1px;height:882px;background:#e8e8e8"></div>
<div class="a" style="left:916px;top:327px;width:1000px;height:36px;background:#424242"></div>
<svg class="a" style="left:933.5px;top:335.0px;" width="20.0" height="20.0" viewBox="0 0 20.0 20.0"><g transform="scale(1.0)"><circle cx="10" cy="10" r="9" fill="#fff"/><path d="M10 2A8 8 0 0 0 10 18Z" fill="#0f64a6"/><path d="M7 7.5h3M6 10h4M7 12.5h3" stroke="#fff" stroke-width="1.2"/><path d="M10 7.5h3M10 10h4M10 12.5h3" stroke="#0f64a6" stroke-width="1.2"/><path d="M6 10h8" stroke="#8fb6d6" stroke-width="1.3" opacity="0.8"/></g></svg>
<div class="a t" style="left:971px;top:337.60px;font-size:14px;line-height:16.80px;color:#ececec;">Current Availability</div>
<svg class="a" style="left:1882px;top:340px;" width="11" height="11" viewBox="0 0 11 11"><path d="M0.5 0.5L10.5 10.5M10.5 0.5L0.5 10.5" stroke="#e8e8e8" stroke-width="1.3"/></svg>
<div class="a" style="left:918px;top:363px;width:996px;height:38px;background:#eeeeee"></div>
<div class="a t" style="left:925px;top:376.40px;font-size:11px;line-height:13.20px;color:#666;">Item Name:</div>
<div class="a" style="left:987px;top:370px;width:199px;height:24.5px;background:#fff;border:1.5px solid #0f5f9f;border-radius:3px;box-sizing:border-box"></div>
<div class="a t" style="left:993px;top:375.30px;font-size:12px;line-height:14.40px;color:#222;">01</div>
<svg class="a" style="left:1168.5px;top:380.0px;" width="10" height="7" viewBox="0 0 10 7"><path d="M0 0H10L5.0 7Z" fill="#0f5f9f"/></svg>
<div class="a t" style="left:1199px;top:376.10px;font-size:11.5px;line-height:13.80px;color:#333;">Orderable:</div>
<svg class="a" style="left:1259px;top:374.5px;" width="17" height="17" viewBox="0 0 17 17"><circle cx="8.5" cy="8.5" r="8.5" fill="#1e9e3a"/><path d="M4.5 8.8L7.3 11.5L12.5 6" fill="none" stroke="#fff" stroke-width="2"/></svg>
<div class="a" style="left:1662px;top:377.5px;width:24px;height:10px;background:#e2e2e2;border-radius:5.0px"></div>
<div class="a" style="left:1662px;top:376.0px;width:13px;height:13px;border-radius:50%;background:#bdbdbd"></div>
<div class="a t" style="left:1696px;top:376.04px;font-size:11.6px;line-height:13.92px;color:#333;">Is Dropship</div>
<div class="a" style="left:1767px;top:377.5px;width:24px;height:10px;background:#e2e2e2;border-radius:5.0px"></div>
<div class="a" style="left:1767px;top:376.0px;width:13px;height:13px;border-radius:50%;background:#bdbdbd"></div>
<div class="a t" style="left:1801px;top:375.80px;font-size:12px;line-height:14.40px;color:#333;">Consignment</div>
<svg class="a" style="left:1886px;top:374px;" width="19" height="17" viewBox="0 0 19 17"><path d="M9.5 1L13 6H6Z" fill="none" stroke="#0f5f9f" stroke-width="1.6"/><rect x="1" y="9.5" width="6.5" height="6.5" fill="none" stroke="#0f5f9f" stroke-width="1.6"/><circle cx="14.5" cy="12.8" r="3.3" fill="none" stroke="#0f5f9f" stroke-width="1.6"/></svg>
<div class="a t" style="left:925px;top:414.56px;font-size:12.4px;line-height:14.88px;color:#222;">SUMMARY</div>
<div class="a t" style="left:1118px;top:414.68px;font-size:12.2px;line-height:14.64px;color:#222;">AVAILABLE</div>
<div class="a t" style="left:1384px;top:414.68px;font-size:12.2px;line-height:14.64px;color:#222;">INCOMING</div>
<div class="a t" style="left:1649px;top:414.68px;font-size:12.2px;line-height:14.64px;color:#222;">SHIPPED</div>
<div class="a t" style="left:931px;top:442.92px;font-size:11.8px;line-height:14.16px;color:#222;">Ordered Qty</div>
<div class="a t" style="left:1041px;top:442.92px;font-size:11.8px;line-height:14.16px;color:#222;">1</div>
<div class="a t" style="left:931px;top:463.92px;font-size:11.8px;line-height:14.16px;color:#222;">Reserved Qty</div>
<div class="a t" style="left:1041px;top:463.92px;font-size:11.8px;line-height:14.16px;color:#222;">0</div>
<div class="a t" style="left:931px;top:484.92px;font-size:11.8px;line-height:14.16px;color:#222;">Existing PO</div>
<div class="a t" style="left:1041px;top:484.92px;font-size:11.8px;line-height:14.16px;color:#222;">0</div>
<div class="a t" style="left:931px;top:505.92px;font-size:11.8px;line-height:14.16px;color:#222;">New PO</div>
<div class="a t" style="left:1041px;top:505.92px;font-size:11.8px;line-height:14.16px;color:#222;">0</div>
<div class="a" style="left:1118px;top:434.5px;width:250px;height:92.5px;border:1px solid #d3dbe3;box-sizing:border-box;background:#fff"></div>
<div class="a" style="left:1384px;top:434.5px;width:249px;height:92.5px;border:1px solid #d3dbe3;box-sizing:border-box;background:#fff"></div>
<div class="a" style="left:1649px;top:434.5px;width:250px;height:92.5px;border:1px solid #d3dbe3;box-sizing:border-box;background:#fff"></div>
<div class="a t" style="left:1127px;top:442.80px;font-size:12px;line-height:14.40px;color:#777;">Quantity on Hand</div>
<div class="a t" style="right:564px;top:442.80px;font-size:12px;line-height:14.40px;color:#222;text-align:right;">99</div>
<div class="a t" style="left:1127px;top:462.80px;font-size:12px;line-height:14.40px;color:#777;">Damaged on Hand</div>
<div class="a t" style="right:564px;top:462.80px;font-size:12px;line-height:14.40px;color:#222;text-align:right;">0</div>
<div class="a t" style="left:1127px;top:482.80px;font-size:12px;line-height:14.40px;color:#777;">Quantity on SO</div>
<div class="a t" style="right:564px;top:482.80px;font-size:12px;line-height:14.40px;color:#222;text-align:right;">1</div>
<div class="a" style="left:1127px;top:500px;width:231px;height:1px;background:#ececec"></div>
<div class="a t" style="left:1127px;top:505.80px;font-size:12px;line-height:14.40px;color:#222;">Quantity Available</div>
<div class="a t" style="right:564px;top:505.80px;font-size:12px;line-height:14.40px;color:#222;text-align:right;">1</div>
<div class="a t" style="left:1393px;top:442.80px;font-size:12px;line-height:14.40px;color:#777;">Quantity on PO</div>
<div class="a t" style="right:299px;top:442.80px;font-size:12px;line-height:14.40px;color:#1d6aa5;text-align:right;">337</div>
<div class="a t" style="left:1393px;top:462.80px;font-size:12px;line-height:14.40px;color:#777;">Quantity Reserved</div>
<div class="a t" style="right:299px;top:462.80px;font-size:12px;line-height:14.40px;color:#1d6aa5;text-align:right;">148</div>
<div class="a" style="left:1393px;top:500.5px;width:230px;height:1px;background:#ececec"></div>
<div class="a t" style="left:1393px;top:505.80px;font-size:12px;line-height:14.40px;color:#222;">Avail Incoming</div>
<div class="a t" style="right:299px;top:505.80px;font-size:12px;line-height:14.40px;color:#1d6aa5;text-align:right;">189</div>
<div class="a t" style="left:1658px;top:442.92px;font-size:11.8px;line-height:14.16px;color:#777;">Quantity on Ship Orders</div>
<div class="a t" style="right:33px;top:442.80px;font-size:12px;line-height:14.40px;color:#222;text-align:right;">0</div>
<div class="a t" style="left:1658px;top:462.92px;font-size:11.8px;line-height:14.16px;color:#777;">Quantity on Shipped</div>
<div class="a t" style="right:33px;top:462.80px;font-size:12px;line-height:14.40px;color:#222;text-align:right;">0</div>
<div class="a t" style="left:1658px;top:505.92px;font-size:11.8px;line-height:14.16px;color:#777;">Quantity on Backorder</div>
<div class="a t" style="right:33px;top:505.80px;font-size:12px;line-height:14.40px;color:#222;text-align:right;">0</div>
<div class="a" style="left:918px;top:544px;width:996px;height:1.5px;background:#e8e8e8"></div>
<div class="a t" style="left:925px;top:557.74px;font-size:12.1px;line-height:14.52px;color:#222;">CHOOSE ACTION</div>
<div class="a" style="left:931px;top:589.0px;width:13px;height:13px;border-radius:50%;border:1.4px solid #2a73b5;box-sizing:border-box;background:#fff"></div>
<div class="a" style="left:931px;top:613.0px;width:13px;height:13px;border-radius:50%;border:1.4px solid #2a73b5;box-sizing:border-box;background:#fff"></div>
<div class="a" style="left:931px;top:637.0px;width:13px;height:13px;border-radius:50%;border:1.4px solid #2a73b5;box-sizing:border-box;background:#fff"></div>
<div class="a" style="left:934px;top:640.0px;width:7px;height:7px;border-radius:50%;background:#1565a8"></div>
<div class="a" style="left:931px;top:661.0px;width:13px;height:13px;border-radius:50%;border:1.4px solid #2a73b5;box-sizing:border-box;background:#fff"></div>
<div class="a t" style="left:948px;top:588.98px;font-size:11.7px;line-height:14.04px;color:#222">Use In Stock Qty <span style="color:#777">(Note: If Stock is not available then system will automatically Create PO Request)</span></div>
<div class="a t" style="left:948px;top:612.98px;font-size:11.7px;line-height:14.04px;color:#222">Use In Stock Qty &amp; Reserve from existing PO <span style="color:#777">(Note: If Stock and reserve is not available then system will automatically Create PO)</span></div>
<div class="a t" style="left:948px;top:636.98px;font-size:11.7px;line-height:14.04px;color:#222">Create New PO Request</div>
<div class="a t" style="right:396px;top:660.98px;font-size:11.7px;line-height:14.04px;color:#222">Reserve from existing PO <span style="color:#777">(Note: If reserve is not available then system will automatically Create PO Request)</span></div>
<div class="a" style="left:0px;top:665px;width:1133px;height:375px;background:#fff"></div>
<div class="a" style="left:0px;top:665px;width:1133px;height:25px;background:#646464"></div>
<div class="a t" style="left:10px;top:673.00px;font-size:10px;line-height:12.00px;color:#eeeeee;">Item: 01</div>
<div class="a" style="left:1025px;top:677.5px;width:8px;height:1.2px;background:#ddd"></div>
<div class="a" style="left:1067px;top:674px;width:8px;height:8px;border:1px solid #ddd;box-sizing:border-box"></div>
<svg class="a" style="left:1110px;top:674px;" width="8" height="8" viewBox="0 0 8 8"><path d="M0.3 0.3L7.7 7.7M7.7 0.3L0.3 7.7" stroke="#e0e0e0" stroke-width="1.1"/></svg>
<div class="a" style="left:0px;top:690px;width:117px;height:350px;background:#e6e6e6"></div>
<div class="a" style="left:0px;top:717px;width:115px;height:27px;background:#fff"></div>
<div class="a" style="left:115px;top:717px;width:2px;height:27px;background:#0f5f9f"></div>
<svg class="a" style="left:4px;top:700px;" width="8" height="8" viewBox="0 0 8 8"><path d="M4 0.7L7.3 4L4 7.3L0.7 4Z" fill="none" stroke="#5a9ac9" stroke-width="1"/></svg>
<div class="a t" style="left:19.5px;top:698.84px;font-size:8.6px;line-height:10.32px;color:#15609e;">General</div>
<svg class="a" style="left:4.5px;top:728px;" width="6" height="6" viewBox="0 0 6 6"><circle cx="3" cy="3" r="2.4" fill="none" stroke="#999" stroke-width="1.1"/></svg>
<div class="a t" style="left:19.5px;top:725.84px;font-size:8.6px;line-height:10.32px;color:#222;">Pricing &amp; UOM</div>
<svg class="a" style="left:4.5px;top:755px;" width="6" height="6" viewBox="0 0 6 6"><circle cx="3" cy="3" r="2.4" fill="none" stroke="#5a9ac9" stroke-width="1.1"/></svg>
<div class="a t" style="left:19.5px;top:752.84px;font-size:8.6px;line-height:10.32px;color:#15609e;">Item variations</div>
<svg class="a" style="left:4.5px;top:782px;" width="6" height="6" viewBox="0 0 6 6"><circle cx="3" cy="3" r="2.4" fill="none" stroke="#5a9ac9" stroke-width="1.1"/></svg>
<div class="a t" style="left:19.5px;top:779.84px;font-size:8.6px;line-height:10.32px;color:#15609e;">Packaging</div>
<svg class="a" style="left:4.5px;top:809px;" width="6" height="6" viewBox="0 0 6 6"><circle cx="3" cy="3" r="2.4" fill="none" stroke="#5a9ac9" stroke-width="1.1"/></svg>
<div class="a t" style="left:19.5px;top:806.84px;font-size:8.6px;line-height:10.32px;color:#15609e;">Dimensions</div>
<svg class="a" style="left:3px;top:836px;" width="8" height="6" viewBox="0 0 8 6"><path d="M2.5 1.5H7.5M0.5 4.5H5.5" stroke="#5a9ac9" stroke-width="1"/></svg>
<div class="a t" style="left:19.5px;top:833.84px;font-size:8.6px;line-height:10.32px;color:#15609e;">Related Items</div>
<svg class="a" style="left:3px;top:863px;" width="8" height="6" viewBox="0 0 8 6"><path d="M2.5 1.5H7.5M0.5 4.5H5.5" stroke="#5a9ac9" stroke-width="1"/></svg>
<div class="a t" style="left:19.5px;top:860.84px;font-size:8.6px;line-height:10.32px;color:#15609e;">Substituted items</div>
<svg class="a" style="left:4.5px;top:890px;" width="6" height="6" viewBox="0 0 6 6"><circle cx="3" cy="3" r="2.4" fill="none" stroke="#5a9ac9" stroke-width="1.1"/></svg>
<div class="a t" style="left:19.5px;top:887.84px;font-size:8.6px;line-height:10.32px;color:#15609e;">Barcodes</div>
<svg class="a" style="left:4.5px;top:917px;" width="6" height="6" viewBox="0 0 6 6"><circle cx="3" cy="3" r="2.4" fill="none" stroke="#5a9ac9" stroke-width="1.1"/></svg>
<div class="a t" style="left:19.5px;top:914.84px;font-size:8.6px;line-height:10.32px;color:#15609e;">Vendors</div>
<svg class="a" style="left:4.5px;top:944px;" width="6" height="6" viewBox="0 0 6 6"><circle cx="3" cy="3" r="2.4" fill="none" stroke="#5a9ac9" stroke-width="1.1"/></svg>
<div class="a t" style="left:19.5px;top:941.84px;font-size:8.6px;line-height:10.32px;color:#15609e;">Customers</div>
<svg class="a" style="left:3px;top:972px;" width="8" height="6" viewBox="0 0 8 6"><path d="M2.5 1.5H7.5M0.5 4.5H5.5" stroke="#5a9ac9" stroke-width="1"/></svg>
<div class="a t" style="left:19.5px;top:969.84px;font-size:8.6px;line-height:10.32px;color:#15609e;">Workorders</div>
<svg class="a" style="left:4.5px;top:999px;" width="6" height="6" viewBox="0 0 6 6"><circle cx="3" cy="3" r="2.4" fill="none" stroke="#5a9ac9" stroke-width="1.1"/></svg>
<div class="a t" style="left:19.5px;top:996.84px;font-size:8.6px;line-height:10.32px;color:#15609e;">Stores</div>
<svg class="a" style="left:4.5px;top:1026px;" width="6" height="6" viewBox="0 0 6 6"><circle cx="3" cy="3" r="2.4" fill="none" stroke="#5a9ac9" stroke-width="1.1"/></svg>
<div class="a t" style="left:19.5px;top:1023.84px;font-size:8.6px;line-height:10.32px;color:#15609e;">Expenses</div>
<div class="a" style="left:117px;top:717px;width:1016px;height:1px;background:#e6e6e6"></div>
<div class="a" style="left:914px;top:695px;width:87px;height:17.5px;background:#0f5f9c;border-radius:1px"></div>
<div class="a t" style="left:914px;top:698.88px;width:87px;text-align:center;font-size:8.2px;line-height:9.84px;color:#fff">CREATE NEW PO</div>
<div class="a" style="left:1002px;top:695px;width:16px;height:17.5px;background:#0f5f9c;border-radius:1px"></div>
<svg class="a" style="left:1007.0px;top:702.25px;" width="6" height="3.5" viewBox="0 0 6 3.5"><path d="M0 0H6L3.0 3.5Z" fill="#fff"/></svg>
<div class="a" style="left:1026px;top:695px;width:85px;height:17.5px;background:#0f5f9c;border-radius:1px"></div>
<div class="a t" style="left:1026px;top:698.88px;width:85px;text-align:center;font-size:8.2px;line-height:9.84px;color:#fff">ITEM OVERVIEW</div>
<div class="a" style="left:1112px;top:695px;width:16px;height:17.5px;background:#0f5f9c;border-radius:1px"></div>
<svg class="a" style="left:1117.0px;top:702.25px;" width="6" height="3.5" viewBox="0 0 6 3.5"><path d="M0 0H6L3.0 3.5Z" fill="#fff"/></svg>
<div class="a" style="left:1126px;top:728px;width:5px;height:192px;background:#f2f2f2;border-radius:2px"></div>
<div class="a t" style="left:123px;top:726.42px;font-size:9.3px;line-height:11.16px;color:#222;">PRICING &amp; UOM</div>
<div class="a t" style="left:123px;top:747.62px;font-size:7.3px;line-height:8.76px;color:#666;">LAST COST</div>
<div class="a" style="left:123px;top:759.5px;width:326px;height:17.5px;background:#f3f3f3;border-radius:2px;box-shadow:inset 0 0 0 1px #ededed"></div>
<div class="a" style="left:129px;top:763px;width:22px;height:11px;background:#a7c7ec"></div>
<div class="a t" style="left:129.5px;top:763.50px;font-size:8.5px;line-height:10.20px;color:#222;">$0.00</div>
<div class="a t" style="left:459px;top:747.62px;font-size:7.3px;line-height:8.76px;color:#666;">AVERAGE COST</div>
<div class="a" style="left:459px;top:759.5px;width:322px;height:17.5px;background:#f3f3f3;border-radius:2px;box-shadow:inset 0 0 0 1px #ededed"></div>
<div class="a t" style="left:464px;top:763.60px;font-size:8.5px;line-height:10.20px;color:#222;">13.39157</div>
<div class="a t" style="left:791px;top:747.62px;font-size:7.3px;line-height:8.76px;color:#666;">LIST COST</div>
<div class="a" style="left:791px;top:759.5px;width:326px;height:17.5px;background:#f3f3f3;border-radius:2px;box-shadow:inset 0 0 0 1px #ededed"></div>
<div class="a t" style="left:796px;top:763.60px;font-size:8.5px;line-height:10.20px;color:#222;">100.00</div>
<div class="a t" style="left:123px;top:786.62px;font-size:7.3px;line-height:8.76px;color:#666;">TAX CODE</div>
<div class="a t" style="left:163.5px;top:783.60px;font-size:9px;line-height:10.80px;color:#e53935;">*</div>
<div class="a" style="left:123px;top:798.5px;width:326px;height:17.5px;background:#f3f3f3;border-radius:2px;box-shadow:inset 0 0 0 1px #ededed"></div>
<div class="a t" style="left:128px;top:802.60px;font-size:8.5px;line-height:10.20px;color:#222;">Tax</div>
<svg class="a" style="left:438.5px;top:805.25px;" width="7" height="4.5" viewBox="0 0 7 4.5"><path d="M0 0H7L3.5 4.5Z" fill="#b0b0b0"/></svg>
<div class="a t" style="left:459px;top:786.62px;font-size:7.3px;line-height:8.76px;color:#666;">UNIT OF MEASURE SET</div>
<div class="a" style="left:459px;top:798.5px;width:322px;height:17.5px;background:#f3f3f3;border-radius:2px;box-shadow:inset 0 0 0 1px #ededed"></div>
<div class="a t" style="left:464px;top:802.60px;font-size:8.5px;line-height:10.20px;color:#aaa;">UOM Set</div>
<svg class="a" style="left:770.5px;top:805.25px;" width="7" height="4.5" viewBox="0 0 7 4.5"><path d="M0 0H7L3.5 4.5Z" fill="#b0b0b0"/></svg>
<div class="a t" style="left:791px;top:786.62px;font-size:7.3px;line-height:8.76px;color:#666;">UNIT OF MEASURE FOR PRICE LEVELS</div>
<div class="a" style="left:791px;top:798.5px;width:326px;height:17.5px;background:#f7f7f7;border-radius:2px;box-shadow:inset 0 0 0 1px #ededed"></div>
<div class="a t" style="left:123px;top:826.12px;font-size:7.3px;line-height:8.76px;color:#666;">SELLING CARTON FOR PRICE LEVELS</div>
<div class="a" style="left:123px;top:838px;width:326px;height:17.5px;background:#f3f3f3;border-radius:2px;box-shadow:inset 0 0 0 1px #ededed"></div>
<svg class="a" style="left:438.5px;top:844.75px;" width="7" height="4.5" viewBox="0 0 7 4.5"><path d="M0 0H7L3.5 4.5Z" fill="#b0b0b0"/></svg>
<div class="a t" style="left:123px;top:871.02px;font-size:8.3px;line-height:9.96px;color:#444;">Store:</div>
<div class="a" style="left:149px;top:867px;width:88.5px;height:17.5px;background:#ebebeb;border-radius:2px"></div>
<div class="a t" style="left:152px;top:871.22px;font-size:8.8px;line-height:10.56px;color:#222;">All</div>
<svg class="a" style="left:227.5px;top:874.25px;" width="7" height="4.5" viewBox="0 0 7 4.5"><path d="M0 0H7L3.5 4.5Z" fill="#b0b0b0"/></svg>
<div class="a" style="left:1061px;top:867px;width:55.5px;height:17.5px;background:#c9c9c9;border-radius:1px"></div>
<div class="a t" style="left:1061px;top:871.20px;width:55px;text-align:center;font-size:8px;line-height:9.6px;color:#fafafa">DELETE</div>
<div class="a" style="left:123px;top:892.5px;width:994px;height:85px;box-shadow:inset 0 0 0 1px #e4e6e8;background:#fff"></div>
<div class="a" style="left:124px;top:914.5px;width:992px;height:21px;background:#ebf2f7"></div>
<div class="a" style="left:124px;top:956.5px;width:992px;height:21px;background:#ebf2f7"></div>
<div class="a" style="left:123px;top:914px;width:994px;height:1px;background:#e0e3e6"></div>
<div class="a" style="left:248px;top:893px;width:1px;height:84px;background:#e6e8ea"></div>
<div class="a" style="left:372px;top:893px;width:1px;height:84px;background:#e6e8ea"></div>
<div class="a" style="left:496px;top:893px;width:1px;height:84px;background:#e6e8ea"></div>
<div class="a" style="left:620px;top:893px;width:1px;height:84px;background:#e6e8ea"></div>
<div class="a" style="left:744px;top:893px;width:1px;height:84px;background:#e6e8ea"></div>
<div class="a" style="left:868px;top:893px;width:1px;height:84px;background:#e6e8ea"></div>
<div class="a" style="left:992px;top:893px;width:1px;height:84px;background:#e6e8ea"></div>
<div class="a t" style="left:128px;top:898.84px;font-size:8.6px;line-height:10.32px;color:#222;">Level</div>
<div class="a t" style="left:253px;top:898.84px;font-size:8.6px;line-height:10.32px;color:#222;">Selling Price</div>
<div class="a t" style="left:376px;top:898.84px;font-size:8.6px;line-height:10.32px;color:#222;">Margin</div>
<div class="a t" style="left:500px;top:898.84px;font-size:8.6px;line-height:10.32px;color:#222;">Base</div>
<div class="a t" style="left:624px;top:898.84px;font-size:8.6px;line-height:10.32px;color:#222;">Net Last</div>
<div class="a t" style="left:748px;top:898.84px;font-size:8.6px;line-height:10.32px;color:#222;">Net Avg</div>
<div class="a t" style="left:872px;top:898.84px;font-size:8.6px;line-height:10.32px;color:#222;">Discount</div>
<div class="a t" style="left:996px;top:898.84px;font-size:8.6px;line-height:10.32px;color:#222;">Final</div>
<div class="a t" style="left:128.5px;top:920.84px;font-size:8.6px;line-height:10.32px;color:#333;">Price Level A</div>
<div class="a t" style="left:252.5px;top:920.84px;font-size:8.6px;line-height:10.32px;color:#333;">24</div>
<div class="a t" style="left:376px;top:920.84px;font-size:8.6px;line-height:10.32px;color:#333;">72.79</div>
<div class="a t" style="left:483px;top:920.84px;font-size:8.6px;line-height:10.32px;color:#2a5a9a;">%</div>
<div class="a t" style="left:503.5px;top:920.84px;font-size:8.6px;line-height:10.32px;color:#333;">Fixed</div>
<svg class="a" style="left:606.5px;top:924.25px;" width="7" height="4.5" viewBox="0 0 7 4.5"><path d="M0 0H7L3.5 4.5Z" fill="#b8b8b8"/></svg>
<div class="a t" style="left:625.5px;top:920.84px;font-size:8.6px;line-height:10.32px;color:#333;">$24.00</div>
<div class="a t" style="left:749px;top:920.84px;font-size:8.6px;line-height:10.32px;color:#333;">$10.60843</div>
<div class="a t" style="left:976px;top:920.84px;font-size:8.6px;line-height:10.32px;color:#2a5a9a;">%</div>
<div class="a t" style="left:998px;top:920.84px;font-size:8.6px;line-height:10.32px;color:#333;">$24.00</div>
<div class="a t" style="left:128.5px;top:941.84px;font-size:8.6px;line-height:10.32px;color:#333;">Price Level B</div>
<div class="a t" style="left:252.5px;top:941.84px;font-size:8.6px;line-height:10.32px;color:#333;">45.11109</div>
<div class="a t" style="left:376px;top:941.84px;font-size:8.6px;line-height:10.32px;color:#333;">70.31</div>
<div class="a t" style="left:483px;top:941.84px;font-size:8.6px;line-height:10.32px;color:#2a5a9a;">%</div>
<div class="a t" style="left:503.5px;top:941.84px;font-size:8.6px;line-height:10.32px;color:#333;">Average Cost</div>
<svg class="a" style="left:606.5px;top:945.25px;" width="7" height="4.5" viewBox="0 0 7 4.5"><path d="M0 0H7L3.5 4.5Z" fill="#b8b8b8"/></svg>
<div class="a t" style="left:625.5px;top:941.84px;font-size:8.6px;line-height:10.32px;color:#333;">$45.11109</div>
<div class="a t" style="left:749px;top:941.84px;font-size:8.6px;line-height:10.32px;color:#333;">$31.71953</div>
<div class="a t" style="left:976px;top:941.84px;font-size:8.6px;line-height:10.32px;color:#2a5a9a;">%</div>
<div class="a t" style="left:998px;top:941.84px;font-size:8.6px;line-height:10.32px;color:#333;">$45.11109</div>
<div class="a t" style="left:128.5px;top:962.34px;font-size:8.6px;line-height:10.32px;color:#333;">Price Level C</div>
<div class="a t" style="left:252.5px;top:962.34px;font-size:8.6px;line-height:10.32px;color:#333;">41.01009</div>
<div class="a t" style="left:376px;top:962.34px;font-size:8.6px;line-height:10.32px;color:#333;">67.35</div>
<div class="a t" style="left:483px;top:962.34px;font-size:8.6px;line-height:10.32px;color:#2a5a9a;">%</div>
<div class="a t" style="left:503.5px;top:962.34px;font-size:8.6px;line-height:10.32px;color:#333;">Average Cost</div>
<svg class="a" style="left:606.5px;top:965.75px;" width="7" height="4.5" viewBox="0 0 7 4.5"><path d="M0 0H7L3.5 4.5Z" fill="#b8b8b8"/></svg>
<div class="a t" style="left:625.5px;top:962.34px;font-size:8.6px;line-height:10.32px;color:#333;">$41.01009</div>
<div class="a t" style="left:749px;top:962.34px;font-size:8.6px;line-height:10.32px;color:#333;">$27.61852</div>
<div class="a t" style="left:976px;top:962.34px;font-size:8.6px;line-height:10.32px;color:#2a5a9a;">%</div>
<div class="a t" style="left:998px;top:962.34px;font-size:8.6px;line-height:10.32px;color:#333;">$41.01009</div>
<div class="a" style="left:123px;top:988.5px;width:18px;height:6px;background:#e6e6e6;border-radius:3px"></div>
<div class="a" style="left:123px;top:987.0px;width:9px;height:9px;border-radius:50%;background:#c4c4c4"></div>
<div class="a t" style="left:148px;top:986.34px;font-size:8.6px;line-height:10.32px;color:#333;">Use Current Price Level Over Vendor</div>
<div class="a" style="left:123px;top:1008px;width:18px;height:6px;background:#e6e6e6;border-radius:3px"></div>
<div class="a" style="left:123px;top:1006.5px;width:9px;height:9px;border-radius:50%;background:#c4c4c4"></div>
<div class="a t" style="left:148px;top:1005.84px;font-size:8.6px;line-height:10.32px;color:#333;">Use List Cost Percent</div>
<div class="a" style="left:454px;top:988.5px;width:18px;height:6px;background:#e6e6e6;border-radius:3px"></div>
<div class="a" style="left:454px;top:987.0px;width:9px;height:9px;border-radius:50%;background:#c4c4c4"></div>
<div class="a t" style="left:479.5px;top:986.16px;font-size:8.9px;line-height:10.68px;color:#333;">Do not update cost automatically</div>
<div class="a" style="left:454px;top:1008px;width:18px;height:6px;background:#e6e6e6;border-radius:3px"></div>
<div class="a" style="left:454px;top:1006.5px;width:9px;height:9px;border-radius:50%;background:#c4c4c4"></div>
<div class="a t" style="left:479.5px;top:1005.66px;font-size:8.9px;line-height:10.68px;color:#333;">Do not update price automatically</div>
<div class="a" style="left:1011px;top:988.0px;width:18px;height:7px;background:#c9d9f5;border-radius:4px"></div>
<div class="a" style="left:1020px;top:987.0px;width:9px;height:9px;border-radius:50%;background:#0f5f9c"></div>
<div class="a t" style="left:1034.5px;top:986.40px;font-size:8.5px;line-height:10.20px;color:#333;">Purchase In SO Uom</div>
<div class="a" style="left:1011px;top:1007.5px;width:18px;height:7px;background:#c9d9f5;border-radius:4px"></div>
<div class="a" style="left:1020px;top:1006.5px;width:9px;height:9px;border-radius:50%;background:#0f5f9c"></div>
<div class="a t" style="left:1034.5px;top:1005.90px;font-size:8.5px;line-height:10.20px;color:#333;">Create PO Request</div>
<div class="a t" style="left:123px;top:1032.60px;font-size:9px;line-height:10.80px;color:#222;">PRICE EXCEPTION</div>
<div class="a t" style="left:625px;top:1034.90px;font-size:8.5px;line-height:10.20px;color:#333;">RESTOCKING FEE</div>
<div class="a" style="left:1396px;top:272px;width:205px;height:82px;box-sizing:border-box;border:4px solid #f25749;box-shadow:2px 2px 3px rgba(0,0,0,0.55), inset 2px 2px 3px rgba(0,0,0,0.55)"></div>
<div class="a" style="left:894px;top:627px;width:222px;height:36px;box-sizing:border-box;border:4px solid #f25749;box-shadow:2px 2px 3px rgba(0,0,0,0.55), inset 2px 2px 3px rgba(0,0,0,0.55)"></div>
<div class="a" style="left:967px;top:998px;width:153px;height:28px;box-sizing:border-box;border:4px solid #f25749;box-shadow:2px 2px 3px rgba(0,0,0,0.55), inset 2px 2px 3px rgba(0,0,0,0.55)"></div>
</body></html>
